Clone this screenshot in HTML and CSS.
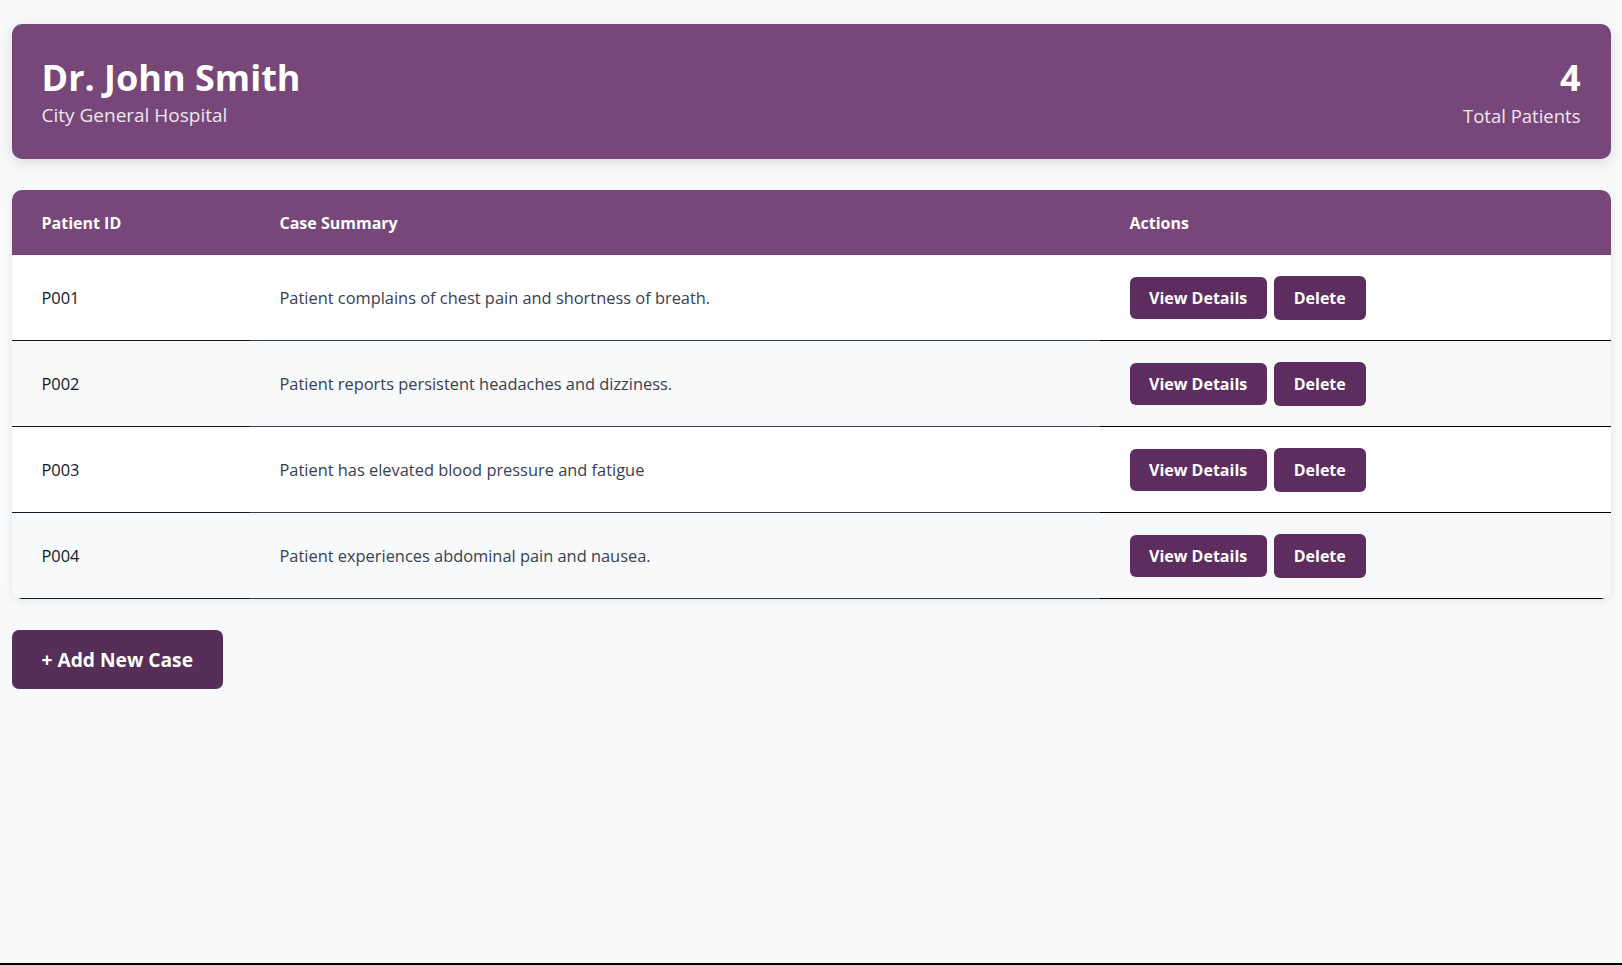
FILE: index.html
```html
<!DOCTYPE html>
<html lang="en">
<head>
<meta charset="utf-8">
<title>Doctor Dashboard</title>
<link rel="stylesheet" href="styles.css">
</head>
<body>
<div class="page">
  <header class="doctor-card">
    <div class="doctor-info">
      <h1 class="doctor-name">Dr. John Smith</h1>
      <p class="doctor-hospital">City General Hospital</p>
    </div>
    <div class="stats">
      <div class="stats-number">4</div>
      <div class="stats-label">Total Patients</div>
    </div>
  </header>

  <div class="table-card">
    <table class="cases">
      <thead>
        <tr>
          <th class="col-id">Patient ID</th>
          <th class="col-summary">Case Summary</th>
          <th class="col-actions">Actions</th>
        </tr>
      </thead>
      <tbody>
        <tr>
          <td class="cell-id">P001</td>
          <td class="cell-summary">Patient complains of chest pain and shortness of breath.</td>
          <td class="cell-actions"><button class="btn btn-view">View Details</button><button class="btn btn-delete">Delete</button></td>
        </tr>
        <tr>
          <td class="cell-id">P002</td>
          <td class="cell-summary">Patient reports persistent headaches and dizziness.</td>
          <td class="cell-actions"><button class="btn btn-view">View Details</button><button class="btn btn-delete">Delete</button></td>
        </tr>
        <tr>
          <td class="cell-id">P003</td>
          <td class="cell-summary">Patient has elevated blood pressure and fatigue</td>
          <td class="cell-actions"><button class="btn btn-view">View Details</button><button class="btn btn-delete">Delete</button></td>
        </tr>
        <tr>
          <td class="cell-id">P004</td>
          <td class="cell-summary">Patient experiences abdominal pain and nausea.</td>
          <td class="cell-actions"><button class="btn btn-view">View Details</button><button class="btn btn-delete">Delete</button></td>
        </tr>
      </tbody>
    </table>
  </div>

  <button class="btn-add">+ Add New Case</button>
</div>
</body>
</html>
```
FILE: styles.css
```css
html {
  background: #000;
}
body {
  margin: 0;
  min-height: calc(100vh - 2px);
  background: #f8f9fb;
  font-family: "Open Sans", "Noto Sans", sans-serif;
  color: #000;
}
.page {
  max-width: 1599px;
  margin: 0 auto;
  padding-top: 24px;
}
.doctor-card {
  display: flex;
  justify-content: space-between;
  align-items: flex-start;
  background: #764778;
  color: #fff;
  border-radius: 10px;
  padding: 30px;
  box-shadow: 0 4px 14px rgba(0, 0, 0, 0.12);
}
.doctor-name {
  margin: 0;
  font-size: 36px;
  line-height: 47px;
  font-weight: 700;
}
.doctor-hospital {
  margin: 1px 0 0;
  font-size: 19px;
  line-height: 27px;
  color: #f1e6f1;
}
.stats {
  text-align: right;
}
.stats-number {
  font-size: 36px;
  line-height: 47px;
  font-weight: 700;
}
.stats-label {
  margin-top: 1px;
  font-size: 18.5px;
  line-height: 27px;
  color: #f1e6f1;
}
.table-card {
  margin-top: 31px;
  background: #fff;
  border-radius: 10px;
  overflow: hidden;
  box-shadow: 0 2px 8px rgba(0, 0, 0, 0.08);
}
.cases {
  width: 100%;
  border-collapse: collapse;
  table-layout: fixed;
}
.cases th {
  background: #764778;
  color: #fff;
  text-align: left;
  font-size: 16px;
  font-weight: 700;
  line-height: 24px;
  padding: 20.5px 29px 20.5px 30px;
}
.col-id {
  width: 179px;
}
.col-summary {
  width: 791px;
}
.cases td {
  padding: 20.5px 29px 20.5px 30px;
  font-size: 16.4px;
  line-height: 24px;
  border-bottom: 1px solid;
  vertical-align: middle;
}
.cases tbody tr:nth-child(even) td {
  background: #f8f9fb;
}
.cell-id {
  color: #111827;
}
.cell-summary {
  color: #374151;
}
.cell-actions {
  color: #000;
  white-space: nowrap;
}
.btn {
  font-family: "Open Sans", "Noto Sans", sans-serif;
  font-size: 16px;
  font-weight: 700;
  line-height: 22px;
  color: #fff;
  background: #5e2d60;
  border: 0;
  border-radius: 6px;
  cursor: pointer;
  vertical-align: middle;
}
.btn-view {
  padding: 10px 19.5px;
  margin-right: 7px;
}
.btn-delete {
  padding: 11px 20px;
}
.btn-add {
  display: block;
  margin-top: 31px;
  font-family: "Open Sans", "Noto Sans", sans-serif;
  font-size: 19.2px;
  font-weight: 700;
  line-height: 25px;
  color: #fff;
  background: #552f57;
  border: 0;
  border-radius: 7px;
  padding: 17px 30px;
  cursor: pointer;
}
```
